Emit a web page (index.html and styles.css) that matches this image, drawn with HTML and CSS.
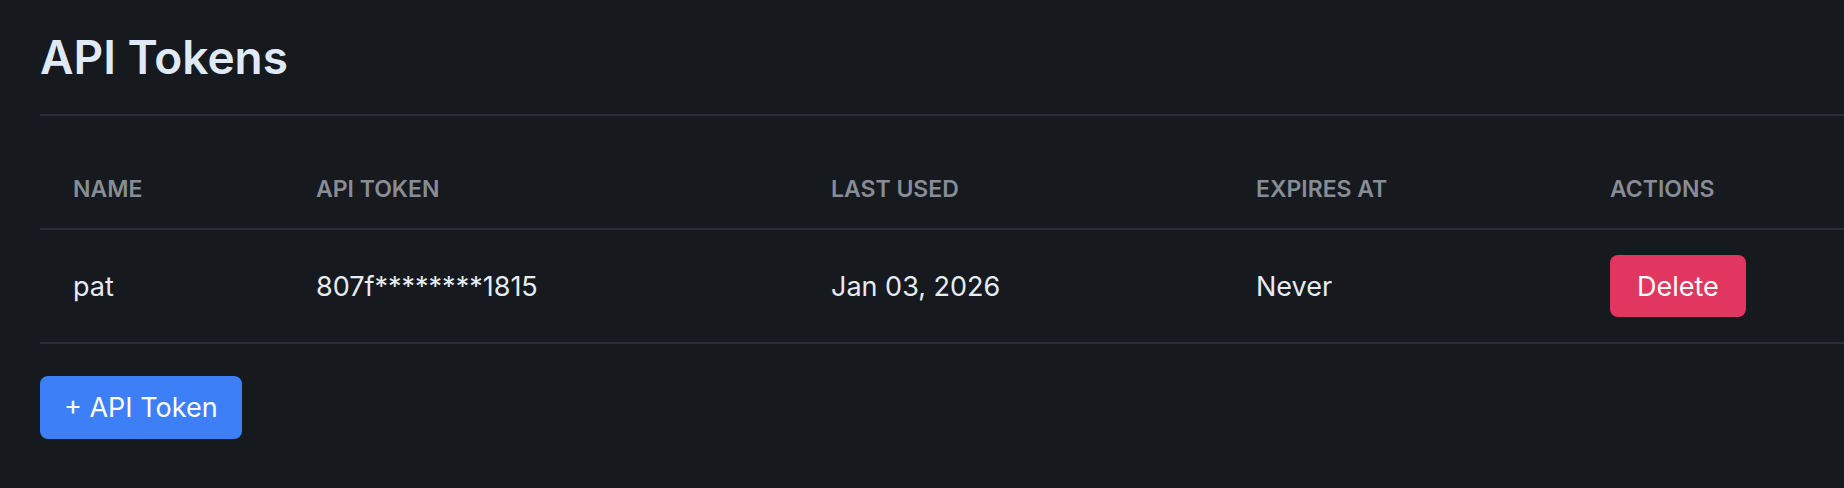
FILE: index.html
```html
<!DOCTYPE html>
<html lang="en">
<head>
    <meta charset="UTF-8">
    <meta name="viewport" content="width=device-width, initial-scale=1.0">
    <title>API Tokens</title>
    <link rel="stylesheet" href="styles.css">
</head>
<body>

<div class="page">
    <div class="page-head">
        <h1>API Tokens</h1>
    </div>

    <div class="tokens">
        <div class="row head">
            <div class="cell">Name</div>
            <div class="cell">API Token</div>
            <div class="cell">Last Used</div>
            <div class="cell">Expires At</div>
            <div class="cell">Actions</div>
        </div>
        <div class="row">
            <div class="cell">pat</div>
            <div class="cell">807f********1815</div>
            <div class="cell">Jan 03, 2026</div>
            <div class="cell">Never</div>
            <div class="cell"><button class="btn btn-delete">Delete</button></div>
        </div>
    </div>

    <button class="btn btn-add">+ API Token</button>
</div>

</body>
</html>
```

FILE: styles.css
```css
body {
    margin: 0;
    background-color: #16191e;
    font-family: Inter, "Noto Sans", sans-serif;
    color: #e6ecf5;
}
.page {
    padding: 0 0 0 40px;
}
.page-head {
    padding: 29px 0 29px;
    border-bottom: 2px solid #2a2d33;
}
h1 {
    margin: 0;
    font-size: 46px;
    line-height: 56px;
    font-weight: 600;
    color: #dfe9f8;
}
.tokens {
    margin-top: 34px;
}
.row {
    display: grid;
    grid-template-columns: 243px 515px 425px 354px 1fr;
    align-items: center;
    height: 112px;
    border-bottom: 2px solid #2a2d33;
    font-size: 27px;
}
.row.head {
    height: 78px;
    font-size: 23px;
    font-weight: 600;
    text-transform: uppercase;
    color: #878d96;
}
.cell {
    padding-left: 33px;
}
.btn {
    font-family: Inter, "Noto Sans", sans-serif;
    font-size: 27px;
    color: #fff;
    border: none;
    border-radius: 8px;
    cursor: pointer;
}
.btn-delete {
    height: 62px;
    padding: 0 27px;
    background-color: #e0365f;
}
.btn-add {
    margin-top: 32px;
    height: 63px;
    padding: 0 24px;
    background-color: #3c7ff6;
}
```
